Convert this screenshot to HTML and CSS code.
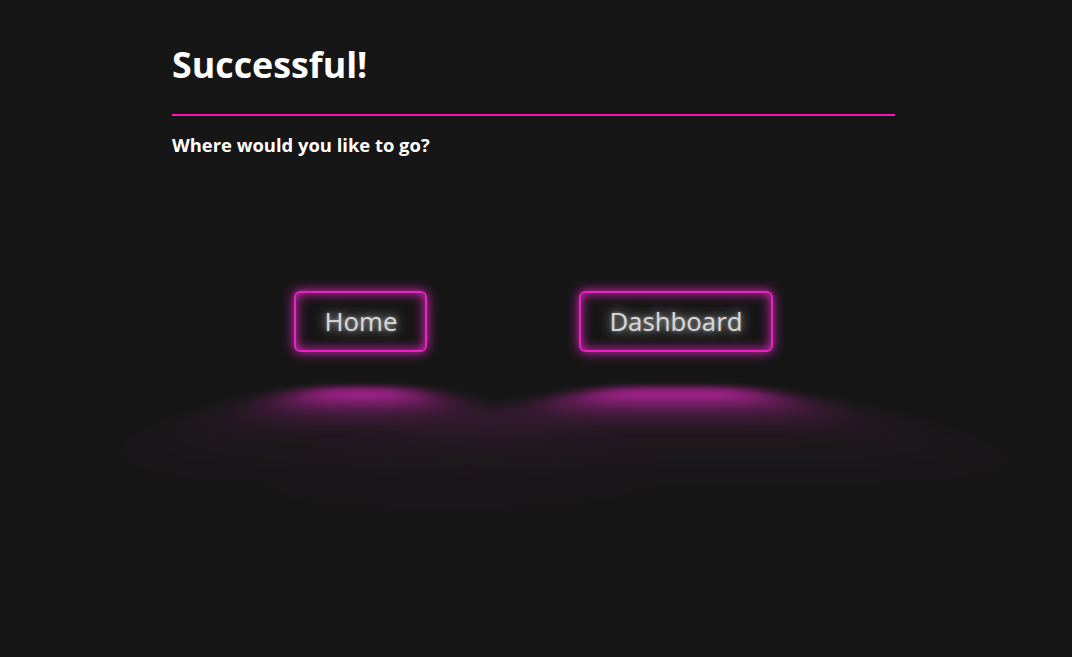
FILE: index.html
```html
<!DOCTYPE html>
<html lang="en">
<head>
<meta charset="utf-8">
<title>Successful!</title>
<link rel="stylesheet" href="styles.css">
</head>
<body>
<main class="page">
  <h1 class="title">Successful!</h1>
  <hr class="divider">
  <p class="subtitle">Where would you like to go?</p>
  <div class="actions">
    <a class="neon-button" href="#">Home</a>
    <a class="neon-button" href="#">Dashboard</a>
  </div>
</main>
</body>
</html>
```

FILE: styles.css
```css
:root {
  --clr-line: hsl(320 100% 54%);
  --clr-neon: hsl(311 78% 52%);
  --clr-bg: #161616;
}

* { box-sizing: border-box; }

html, body {
  margin: 0;
  height: 100%;
  background: var(--clr-bg);
  overflow: hidden;
}

body {
  font-family: "Open Sans", "Liberation Sans", sans-serif;
  color: #fff;
}

.page {
  width: 723px;
  margin-left: 172px;
  padding-top: 38px;
}

.title {
  margin: 0;
  font-size: 35.8px;
  font-weight: 700;
  line-height: 52px;
}

.divider {
  margin: 24px 0 0;
  border: 0;
  height: 2px;
  background: var(--clr-line);
}

.subtitle {
  margin: 16px 0 0;
  font-size: 18.4px;
  font-weight: 700;
  line-height: 26px;
}

.actions {
  display: flex;
  justify-content: center;
  gap: 152px;
  margin-top: 133px;
}

.neon-button {
  font-size: 25.8px;
  line-height: 33px;
  display: inline-block;
  text-decoration: none;
  color: #d8d8d8;
  border: 2px solid var(--clr-neon);
  padding: 12px 28px;
  border-radius: 6px;
  text-shadow: 0 0 3px hsl(0 0% 100% / 0.4), 0 0 12px currentColor;
  box-shadow: inset 0 0 12px 0 var(--clr-neon), 0 0 12px 0 var(--clr-neon);
  position: relative;
}

.neon-button::before {
  pointer-events: none;
  content: "";
  position: absolute;
  background: var(--clr-neon);
  top: 128%;
  left: 0;
  width: 100%;
  height: 100%;
  transform: perspective(1em) rotateX(40deg) scale(1, 0.35);
  filter: blur(1em);
  opacity: 0.85;
}
```
